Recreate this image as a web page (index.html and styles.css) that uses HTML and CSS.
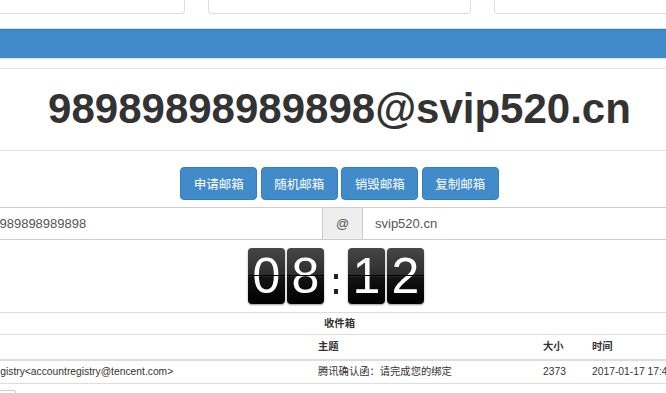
FILE: index.html
```
<!DOCTYPE html>
<html lang="zh">

<head>
  <meta charset="UTF-8">
  <meta name="viewport" content="width=device-width, initial-scale=1.0">
  <title>临时邮箱</title>
  <link rel="stylesheet" href="styles.css">
</head>

<body>

  <div class="page">

    <!-- 顶部三栏 -->
    <div class="top-boxes">
      <div class="box"></div>
      <div class="box"></div>
      <div class="box"></div>
    </div>

    <div class="bar"></div>

    <!-- 当前邮箱 -->
    <div class="mail-title">98989898989898@svip520.cn</div>

    <div class="actions">
      <button class="btn">申请邮箱</button>
      <button class="btn">随机邮箱</button>
      <button class="btn">销毁邮箱</button>
      <button class="btn">复制邮箱</button>
    </div>

    <div class="input-group">
      <input class="form-control" type="text" value="98989898989898">
      <span class="addon">@</span>
      <input class="form-control" type="text" value="svip520.cn">
    </div>

    <!-- 倒计时 -->
    <div class="clock">
      <span class="card">0</span>
      <span class="card">8</span>
      <span class="colon"><i></i><i></i></span>
      <span class="card">1</span>
      <span class="card">2</span>
    </div>

    <!-- 收件箱 -->
    <table class="inbox">
      <colgroup>
        <col style="width:363px">
        <col style="width:225px">
        <col style="width:49px">
        <col style="width:148px">
      </colgroup>
      <tr class="caption">
        <th colspan="4">收件箱</th>
      </tr>
      <tr class="head">
        <th></th>
        <th>主题</th>
        <th>大小</th>
        <th>时间</th>
      </tr>
      <tr class="row">
        <td>accountregistry&lt;accountregistry@tencent.com&gt;</td>
        <td>腾讯确认函：请完成您的绑定</td>
        <td>2373</td>
        <td>2017-01-17 17:48:23</td>
      </tr>
    </table>

    <div class="tools">
      <button class="btn-small">删除</button>
    </div>

  </div>

</body>

</html>
```

FILE: styles.css
```
body {
  font-family: "Liberation Sans", Arial, "Noto Sans CJK SC", sans-serif;
  margin: 0;
  background: #fff;
  color: #333;
  overflow: hidden;
}

.page {
  width: 835px;
  margin-left: -78px;
}

.top-boxes {
  display: flex;
  gap: 23px;
}

.box {
  width: 263px;
  height: 13px;
  border: 1px solid #ddd;
  border-top: none;
  border-radius: 0 0 4px 4px;
  box-sizing: content-box;
  width: 261px;
}

.bar {
  margin-top: 15px;
  height: 28px;
  background: #428bca;
  border-top: 1px solid #3579b5;
  box-shadow: 0 -1px 0 #d3e4f2, 0 1px 0 #d3e4f2;
}

.mail-title {
  margin-top: 10px;
  border-top: 1px solid #e5e5e5;
  border-bottom: 1px solid #e5e5e5;
  padding: 16px 0 17px;
  text-align: center;
  font-size: 42px;
  font-weight: bold;
  line-height: 48px;
  color: #333;
}

.actions {
  display: flex;
  justify-content: center;
  gap: 3.5px;
  margin-top: 16px;
}

.btn {
  width: 77px;
  height: 33px;
  background: #428bca;
  border: 1px solid #357ebd;
  border-radius: 4px;
  color: #fff;
  font-family: "Noto Sans CJK SC", sans-serif;
  font-size: 12.5px;
  padding: 0;
  cursor: pointer;
}

.input-group {
  display: flex;
  margin: 7px 44px 0 50px;
  height: 33px;
}

.form-control {
  flex: 1;
  min-width: 0;
  height: 33px;
  box-sizing: border-box;
  border: 1px solid #ccc;
  padding: 0 12px;
  font-family: "Liberation Sans", Arial, sans-serif;
  font-size: 13px;
  color: #555;
  outline: none;
}

.addon {
  width: 39px;
  box-sizing: border-box;
  display: flex;
  align-items: center;
  justify-content: center;
  background: #eee;
  border-top: 1px solid #ccc;
  border-bottom: 1px solid #ccc;
  font-size: 13px;
  color: #555;
}

.clock {
  display: flex;
  justify-content: center;
  margin-top: 8px;
  padding-right: 7px;
  height: 56px;
}

.card {
  position: relative;
  width: 37px;
  height: 56px;
  margin: 0 1px;
  border-radius: 4px;
  background: linear-gradient(#464646 0%, #2c2c2c 50%, #141414 50%, #000 100%);
  color: #fff;
  font-size: 50px;
  line-height: 56px;
  text-align: center;
  box-shadow: 0 1px 2px rgba(0, 0, 0, 0.4);
}

.card::after {
  content: "";
  position: absolute;
  left: 0;
  right: 0;
  top: 27px;
  height: 1px;
  background: #000;
  box-shadow: 0 1px 0 rgba(255, 255, 255, 0.08);
}

.colon {
  width: 22px;
  display: flex;
  flex-direction: column;
  align-items: center;
  justify-content: flex-end;
  gap: 10px;
  padding-bottom: 10px;
  box-sizing: border-box;
}

.colon i {
  width: 4px;
  height: 5px;
  background: #222;
}

.inbox {
  margin: 8px 0 0 25px;
  width: 785px;
  border-collapse: separate;
  border-spacing: 0;
  table-layout: fixed;
  font-size: 10.3px;
  color: #333;
}

.inbox th,
.inbox td {
  padding: 0 8px;
  text-align: left;
  white-space: nowrap;
  overflow: hidden;
}

.inbox .caption th {
  text-align: center;
  border-top: 1px solid #ddd;
  border-bottom: 1px solid #ddd;
  line-height: 21px;
}

.inbox .head th {
  border-bottom: 2px solid #ddd;
  line-height: 24px;
}

.inbox .row td {
  border-bottom: 1px solid #ddd;
  line-height: 22px;
}

.tools {
  margin: 5px 0 0 64px;
}

.btn-small {
  font-family: "Noto Sans CJK SC", sans-serif;
  font-size: 10px;
  padding: 0 4px;
  height: 17px;
  background: #fff;
  border: 1px solid #ccc;
  border-radius: 2px;
  color: #333;
}
```
